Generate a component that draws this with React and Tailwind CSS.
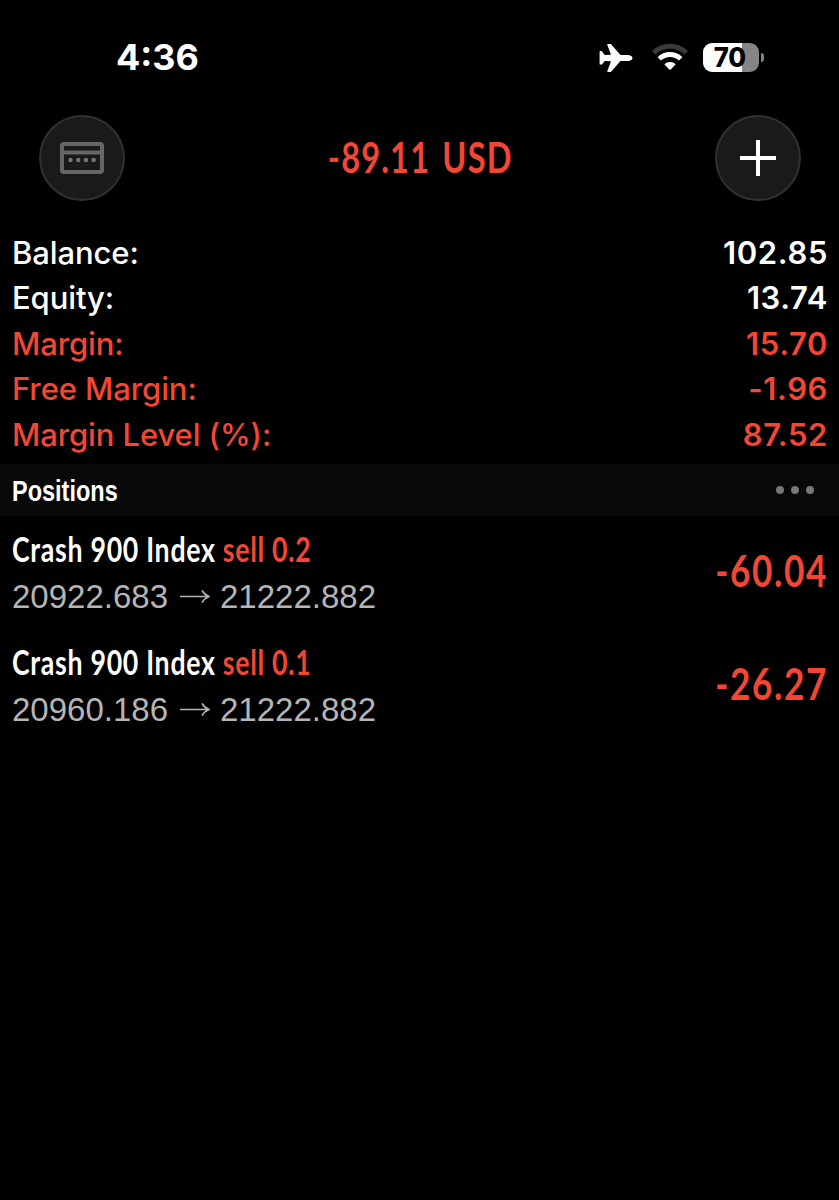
import React from 'react'

const account = [
  { label: "Balance:", value: "102.85", color: "text-white" },
  { label: "Equity:", value: "13.74", color: "text-white" },
  { label: "Margin:", value: "15.70", color: "text-[#f24734]" },
  { label: "Free Margin:", value: "-1.96", color: "text-[#f24734]" },
  { label: "Margin Level (%):", value: "87.52", color: "text-[#f24734]" },
];

const positions = [
  { symbol: "Crash 900 Index", side: "sell 0.2", open: "20922.683", current: "21222.882", profit: "-60.04" },
  { symbol: "Crash 900 Index", side: "sell 0.1", open: "20960.186", current: "21222.882", profit: "-26.27" },
];

const Airplane = () => (
  <svg className="mt-[2px]" width="34" height="30" viewBox="0 0 34 30" fill="white">
    <path d="M33.5 15c0 1.900-2.600 3.100-5.400 3.100h-6.600L12.300 28.500c-.3.400-.7.500-1.100.5H8.900c-.5 0-.8-.4-.6-.9L12 18.200l-6.300-.3-2.600 3.300c-.2.300-.5.400-.8.400H1.200c-.4 0-.6-.3-.6-.7V8.800c0-.4.200-.7.600-.7h1.100c.3 0 .6.100.8.400l2.600 3.600 6.300-.3L8.300 1.900c-.2-.5.100-.9.600-.9h2.300c.4 0 .8.100 1.100.5l9.200 10.400h6.600c2.800 0 5.400 1.200 5.400 3.100z" />
  </svg>
)

const Wifi = () => (
  <svg width="38" height="28" viewBox="0 0 38 28" fill="none">
    <path d="M2.700 9.800a23.500 23.500 0 0 1 32.600 0" stroke="#3a3a3a" strokeWidth="4.800" />
    <path d="M8.300 15.900a15.200 15.200 0 0 1 21.400 0" stroke="white" strokeWidth="4.800" />
    <path d="M13.300 21.200a8.200 8.200 0 0 1 11.400 0L19.700 26.500q-.7.700-1.400 0z" fill="white" />
  </svg>
)

const Battery = () => (
  <div className="flex items-center">
    <div className="w-[56px] h-[29px] rounded-[9px] bg-[linear-gradient(90deg,#fff_70%,#858585_70%)] flex items-center justify-center">
      <span className="mt-px mr-[2px] text-[27px] leading-none font-extrabold text-black tracking-[-0.300px] scale-x-[0.95]">70</span>
    </div>
    <div className="ml-[2px] w-[3px] h-[9px] rounded-r-full bg-[#858585]"></div>
  </div>
)

const App = () => {
  return (
    <div className="min-h-screen bg-black text-white overflow-hidden font-['Inter',sans-serif]">
      {/* Status bar */}
      <div className="h-[115px] flex justify-between items-start pl-[116px] pr-[75px]">
        <span className="mt-[39px] text-[36px] leading-[36px] font-bold">4:36</span>
        <div className="mt-[41px] flex items-center">
          <Airplane />
          <div className="ml-[18px] mr-[14px]"><Wifi /></div>
          <Battery />
        </div>
      </div>

      {/* Header */}
      <header className="h-[86px] flex justify-between items-center pl-[39px] pr-[38px]">
        <button className="size-[86px] rounded-full bg-[#1a1a1a] border-2 border-[#303030] flex items-center justify-center">
          <svg width="44" height="32" viewBox="0 0 44 32" fill="none">
            <rect x="2" y="2" width="40" height="28" rx="2" stroke="#666" strokeWidth="4" />
            <path d="M2 10.500h40" stroke="#666" strokeWidth="4" />
            <circle cx="10.500" cy="18" r="2.200" fill="#777" />
            <circle cx="18.200" cy="18" r="2.200" fill="#777" />
            <circle cx="25.900" cy="18" r="2.200" fill="#777" />
            <circle cx="33.600" cy="18" r="2.200" fill="#777" />
          </svg>
        </button>
        <h1 className="mb-[3px] font-['Lato',sans-serif] text-[42px] leading-none font-bold text-[#f24734] whitespace-nowrap tracking-[1.500px] [word-spacing:4px] scale-x-[0.775]">-89.11 USD</h1>
        <button className="size-[86px] rounded-full bg-[#1a1a1a] border-2 border-[#303030] flex items-center justify-center">
          <svg width="36" height="36" viewBox="0 0 36 36" stroke="white" strokeWidth="4">
            <path d="M18 0v36M0 18h36" />
          </svg>
        </button>
      </header>

      {/* Account summary */}
      <div className="pt-[28.400px] h-[263px] pl-[12px] pr-[11px]">
        {account.map((row, index) => (
          <div key={index} className={`h-[45.600px] flex justify-between items-center text-[31px] leading-none ${row.color}`}>
            <span className="font-medium tracking-[-0.100px]">{row.label}</span>
            <span className="font-semibold tracking-[0.600px]">{row.value}</span>
          </div>
        ))}
      </div>

      {/* Positions */}
      <div className="h-[52px] bg-[#080808] flex justify-between items-center pl-[12px] pr-[25px]">
        <h2 className="mt-[2px] text-[29px] leading-none font-['Liberation_Sans',sans-serif] font-bold origin-left scale-x-[0.81]">Positions</h2>
        <div className="flex gap-[7px]">
          <span className="size-[8px] rounded-full bg-[#777]"></span>
          <span className="size-[8px] rounded-full bg-[#777]"></span>
          <span className="size-[8px] rounded-full bg-[#777]"></span>
        </div>
      </div>
      <ul>
        {positions.map((pos, index) => (
          <li key={index} className="h-[113px] px-[12px] flex justify-between items-start">
            <div className="pt-[16px]">
              <p className="font-['Lato',sans-serif] text-[34px] leading-[34px] font-bold whitespace-nowrap tracking-[0.900px] origin-left scale-x-[0.785]">
                {pos.symbol} <span className="text-[#f24734]">{pos.side}</span>
              </p>
              <p className="mt-[14px] flex items-center font-['Liberation_Sans',sans-serif] text-[33px] leading-[34px] text-[#b5b5b5]">
                <span>{pos.open}</span>
                <svg className="ml-[12px] mr-[10px]" width="30" height="14" viewBox="0 0 30 14" fill="none" stroke="#b5b5b5" strokeWidth="1.500">
                  <path d="M0 6.500h29M22 0.300c1.500 3 4 5 7 6.200c-3 1.200-5.500 3.200-7 6.200" />
                </svg>
                <span>{pos.current}</span>
              </p>
            </div>
            <span className="mt-[32px] font-['Lato',sans-serif] text-[44px] leading-[44px] font-bold text-[#f24734] tracking-[2px] mr-[-1px] origin-right scale-x-[0.8]">{pos.profit}</span>
          </li>
        ))}
      </ul>
    </div>
  )
}

export default App
